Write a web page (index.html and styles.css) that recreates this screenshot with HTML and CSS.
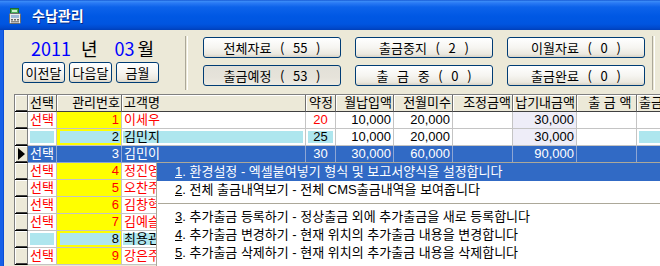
FILE: index.html
```html
<!DOCTYPE html>
<html lang="ko">
<head>
  <meta charset="UTF-8">
  <title>수납관리</title>
  <link rel="stylesheet" href="styles.css">
</head>
<body>
  <div class="window">
    <!-- Title bar -->
    <div class="titlebar">
      <svg class="app-icon" width="14" height="16" viewBox="0 0 14 16">
        <rect x="2.5" y="0.5" width="8" height="5" fill="#48b05a" stroke="#1f6e2e"/>
        <rect x="4" y="2" width="5" height="2" fill="#c8f0c8"/>
        <rect x="1.5" y="5.5" width="11" height="10" rx="1" fill="#ebebeb" stroke="#6b6b6b"/>
        <rect x="3" y="7" width="8" height="3" fill="#9cb8d6"/>
        <rect x="3" y="11" width="2" height="1.5" fill="#666"/>
        <rect x="6" y="11" width="2" height="1.5" fill="#666"/>
        <rect x="9" y="11" width="2" height="1.5" fill="#666"/>
        <rect x="3" y="13" width="8" height="1.5" fill="#888"/>
      </svg>
      <span class="title">수납관리</span>
    </div>

    <div class="client">
      <div class="toolbar">
        <div class="period">
          <div class="ym">
            <span class="num">2011</span><span class="unit yr">년</span><span class="num">03</span><span class="unit mo">월</span>
          </div>
          <div class="month-nav">
            <button class="btn small">이전달</button>
            <button class="btn small">다음달</button>
            <button class="btn small">금월</button>
          </div>
        </div>
        <div class="vsep"></div>
        <div class="filters">
          <button class="btn">전체자료 ( 55 )</button>
          <button class="btn">출금중지 ( 2 )</button>
          <button class="btn">이월자료 ( 0 )</button>
          <button class="btn active">출금예정 ( 53 )</button>
          <button class="btn">출 금 중 ( 0 )</button>
          <button class="btn">출금완료 ( 0 )</button>
        </div>
        <div class="vsep last"></div>
      </div>

      <!-- Data grid -->
      <div class="grid">
        <div class="row head">
          <div class="cell ind"></div>
          <div class="cell">선택</div>
          <div class="cell r">관리번호</div>
          <div class="cell">고객명</div>
          <div class="cell c">약정</div>
          <div class="cell r">월납입액</div>
          <div class="cell r">전월미수</div>
          <div class="cell r">조정금액</div>
          <div class="cell r">납기내금액</div>
          <div class="cell r">출 금 액&nbsp;</div>
          <div class="cell">출금일</div>
        </div>

        <div class="row">
          <div class="cell ind"></div>
          <div class="cell sel">선택</div>
          <div class="cell no r">1</div>
          <div class="cell red">이세우</div>
          <div class="cell c red">20</div>
          <div class="cell r">10,000</div>
          <div class="cell r">20,000</div>
          <div class="cell r"></div>
          <div class="cell due r">30,000</div>
          <div class="cell"></div>
          <div class="cell"></div>
        </div>

        <div class="row">
          <div class="cell ind"></div>
          <div class="cell bx"><div class="box"></div></div>
          <div class="cell no bx"><div class="box r">2</div></div>
          <div class="cell bx name"><div class="box">김민지</div></div>
          <div class="cell bx"><div class="box c">25</div></div>
          <div class="cell r">10,000</div>
          <div class="cell r">20,000</div>
          <div class="cell r"></div>
          <div class="cell due r">30,000</div>
          <div class="cell"></div>
          <div class="cell bx"><div class="box"></div></div>
        </div>

        <div class="row cur">
          <div class="cell ind"><span class="arrow"></span></div>
          <div class="cell">선택</div>
          <div class="cell no r">3</div>
          <div class="cell">김민이</div>
          <div class="cell c">30</div>
          <div class="cell r">30,000</div>
          <div class="cell r">60,000</div>
          <div class="cell r"></div>
          <div class="cell due r">90,000</div>
          <div class="cell"></div>
          <div class="cell"></div>
        </div>

        <!-- rows below are mostly under the popup menu -->
        <div class="row">
          <div class="cell ind"></div>
          <div class="cell sel">선택</div>
          <div class="cell no r">4</div>
          <div class="cell red">정진영</div>
          <div class="cell c"></div>
          <div class="cell r"></div>
          <div class="cell r"></div>
          <div class="cell r"></div>
          <div class="cell due r"></div>
          <div class="cell"></div>
          <div class="cell"></div>
        </div>

        <div class="row">
          <div class="cell ind"></div>
          <div class="cell sel">선택</div>
          <div class="cell no r">5</div>
          <div class="cell red">오찬주</div>
          <div class="cell c"></div>
          <div class="cell r"></div>
          <div class="cell r"></div>
          <div class="cell r"></div>
          <div class="cell due r"></div>
          <div class="cell"></div>
          <div class="cell"></div>
        </div>

        <div class="row">
          <div class="cell ind"></div>
          <div class="cell sel">선택</div>
          <div class="cell no r">6</div>
          <div class="cell red">김창혁</div>
          <div class="cell c"></div>
          <div class="cell r"></div>
          <div class="cell r"></div>
          <div class="cell r"></div>
          <div class="cell due r"></div>
          <div class="cell"></div>
          <div class="cell"></div>
        </div>

        <div class="row">
          <div class="cell ind"></div>
          <div class="cell sel">선택</div>
          <div class="cell no r">7</div>
          <div class="cell red">김예슬</div>
          <div class="cell c"></div>
          <div class="cell r"></div>
          <div class="cell r"></div>
          <div class="cell r"></div>
          <div class="cell due r"></div>
          <div class="cell"></div>
          <div class="cell"></div>
        </div>

        <div class="row">
          <div class="cell ind"></div>
          <div class="cell bx"><div class="box"></div></div>
          <div class="cell no bx"><div class="box r">8</div></div>
          <div class="cell bx name"><div class="box">최용관</div></div>
          <div class="cell bx"><div class="box c"></div></div>
          <div class="cell r"></div>
          <div class="cell r"></div>
          <div class="cell r"></div>
          <div class="cell due r"></div>
          <div class="cell"></div>
          <div class="cell"></div>
        </div>

        <div class="row">
          <div class="cell ind"></div>
          <div class="cell sel">선택</div>
          <div class="cell no r">9</div>
          <div class="cell red">강은주</div>
          <div class="cell c"></div>
          <div class="cell r"></div>
          <div class="cell r"></div>
          <div class="cell r"></div>
          <div class="cell due r"></div>
          <div class="cell"></div>
          <div class="cell"></div>
        </div>
      </div>
    </div>

    <!-- Popup menu -->
    <ul class="ctx-menu">
      <li class="on"><u>1</u>. 환경설정 - 엑셀붙여넣기 형식 및 보고서양식을 설정합니다</li>
      <li><u>2</u>. 전체 출금내역보기 - 전체 CMS출금내역을 보여줍니다</li>
      <li class="sep"></li>
      <li><u>3</u>. 추가출금 등록하기 - 정상출금 외에 추가출금을 새로 등록합니다</li>
      <li><u>4</u>. 추가출금 변경하기 - 현재 위치의 추가출금 내용을 변경합니다</li>
      <li><u>5</u>. 추가출금 삭제하기 - 현재 위치의 추가출금 내용을 삭제합니다</li>
    </ul>
  </div>
</body>
</html>
```

FILE: styles.css
```css
body {
  margin: 0;
  padding: 0;
  font-family: "Noto Sans CJK KR", "Noto Sans", sans-serif;
  font-size: 13px;
  color: #000;
  overflow: hidden;
}

.window {
  position: relative;
  width: 660px;
  height: 266px;
  overflow: hidden;
  background-color: #ece9d8;
}

/* Title bar */
.titlebar {
  display: flex;
  align-items: center;
  height: 30px;
  padding-left: 8px;
  box-sizing: border-box;
  background: linear-gradient(to bottom, #0847c8 0, #3d8ef8 1px, #2a7af4 3px, #0d63ea 7px, #0058e4 16px, #0055e0 24px, #0049cc 28px, #003fb8 30px);
}

.app-icon {
  flex: none;
  margin-top: 1px;
}

.title {
  margin-left: 10px;
  color: #fff;
  font-size: 14px;
  font-weight: bold;
  text-shadow: 1px 1px 0 #0a2a86;
}

.client {
  height: 236px;
  border-left: 3px solid #1660e8;
  box-shadow: inset 1px 0 0 #0a4ed6;
}

/* Top toolbar */
.toolbar {
  display: flex;
  align-items: flex-start;
  height: 64px;
  padding-top: 7px;
  box-sizing: border-box;
}

.period {
  width: 137px;
  margin-left: 19px;
}

.ym {
  height: 25px;
  padding-left: 9px;
  font-size: 18px;
  line-height: 22px;
  white-space: nowrap;
}

.ym .num {
  color: #0000ff;
}

.ym .unit.yr {
  margin: 0 17px 0 10px;
}

.ym .unit.mo {
  margin-left: 3px;
}

.month-nav {
  display: flex;
  gap: 4px;
}

.btn {
  height: 21px;
  padding: 0;
  border: 1px solid #003c74;
  border-radius: 3px;
  background: linear-gradient(to bottom, #ffffff 0, #f6f5f1 50%, #ebe8df 85%, #d8d3c6 100%);
  font-family: inherit;
  font-size: 13px;
  line-height: 19px;
  word-spacing: 5px;
  color: #000;
  white-space: nowrap;
}

.btn.small {
  width: 43px;
}

.btn.active {
  background: linear-gradient(to bottom, #e2e0d8 0, #e6e3da 60%, #eceae2 100%);
}

.vsep {
  width: 1px;
  height: 54px;
  margin-top: -1px;
  margin-left: 26px;
  border-left: 1px solid #aca899;
  border-right: 1px solid #fff;
}

.vsep.last {
  margin-left: 7px;
}

.filters {
  display: grid;
  grid-template-columns: repeat(3, 138px);
  grid-auto-rows: 21px;
  column-gap: 14px;
  row-gap: 7px;
  margin-left: 15px;
}

/* Grid */
.grid {
  margin-left: 11px;
  border-top: 1px solid #808080;
  border-left: 1px solid #808080;
  background-color: #fff;
  font-family: "Liberation Sans", "Noto Sans CJK KR", sans-serif;
}

.row {
  display: grid;
  grid-template-columns: 13px 29px 65px 184px 30px 58px 59px 60px 64px 60px 100px;
  height: 17px;
}

.cell {
  box-sizing: border-box;
  height: 17px;
  padding: 0 2px;
  border-right: 1px solid #c4c4c4;
  border-bottom: 1px solid #c4c4c4;
  line-height: 16px;
  white-space: nowrap;
}

.r { text-align: right; }
.c { text-align: center; }
.red, .sel { color: #ff0000; }

.head .cell {
  background-color: #ece9d8;
  border-right-color: #6e6e6e;
  border-bottom-color: #404040;
  box-shadow: inset 1px 1px 0 #fff;
  padding: 0 1px 0 2px;
}

.cell.ind {
  padding: 0;
  background-color: #ece9d8;
  border-right-color: #808080;
  border-bottom-color: #000;
  box-shadow: inset 1px 1px 0 #fff, inset 0 -1px 0 #404040;
}

.cell.no {
  color: #ff0000;
  background-color: #ffff00;
}

.cell.due {
  background-color: #eeedf8;
}

.cell.bx {
  padding: 2px;
}

.cell.no.bx {
  padding: 2px 1px 2px 3px;
}

.cell.bx.name {
  padding: 2px 2px 2px 1px;
}

.box {
  height: 12px;
  padding: 0 1px;
  line-height: 12px;
  background-color: #aee6ee;
  color: #000;
}

.row.cur .cell {
  background-color: #316ac5;
  color: #fff;
  border-right-color: #8ea6d4;
  border-bottom-color: #8ea6d4;
}

.row.cur .cell.ind {
  background-color: #ece9d8;
  border-right-color: #808080;
  border-bottom-color: #000;
}

.arrow {
  display: block;
  width: 0;
  height: 0;
  margin: 2px 0 0 3px;
  border-left: 7px solid #000;
  border-top: 6px solid transparent;
  border-bottom: 6px solid transparent;
}

/* Popup menu */
.ctx-menu {
  position: absolute;
  left: 156px;
  top: 162px;
  width: 540px;
  margin: 0;
  padding: 0 0 4px;
  list-style: none;
  background-color: #fff;
  border: 1px solid #aca899;
  font-family: "Liberation Sans", "Noto Sans CJK KR", sans-serif;
  font-size: 13px;
}

.ctx-menu li {
  height: 18px;
  padding-left: 18px;
  line-height: 18px;
  white-space: nowrap;
}

.ctx-menu li.on {
  background-color: #316ac5;
  color: #fff;
}

.ctx-menu li.sep {
  height: 1px;
  margin: 4px 0 4px 1px;
  padding: 0;
  background-color: #aca899;
}
```
